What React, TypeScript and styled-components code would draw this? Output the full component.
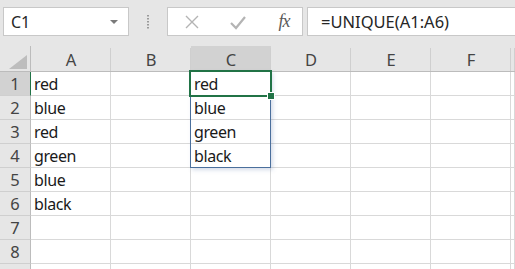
import styled, { createGlobalStyle } from "styled-components";

const GlobalStyle = createGlobalStyle`
  html, body {
    margin: 0;
    padding: 0;
    background: #e6e6e6;
  }
  body {
    font-family: "Noto Sans", "Open Sans", sans-serif;
    overflow: hidden;
  }
`;

const Page = styled.div`
  width: 515px;
  height: 269px;
  overflow: hidden;
  display: flex;
  flex-direction: column;
  background: #e6e6e6;
`;

const FormulaBar = styled.div`
  display: flex;
  align-items: flex-start;
  height: 46px;
  flex-shrink: 0;
  padding: 7px 0 0 3px;
  box-sizing: border-box;
`;

const NameBox = styled.div`
  width: 126px;
  height: 29px;
  box-sizing: border-box;
  background: #fff;
  border: 1px solid #c8c8c8;
  display: flex;
  align-items: center;
  justify-content: space-between;
  padding: 0 10px 0 7px;
  font-size: 16px;
  color: #262626;
`;

const Caret = styled.span`
  width: 0;
  height: 0;
  border-left: 4px solid transparent;
  border-right: 4px solid transparent;
  border-top: 4px solid #7a7a7a;
  margin-top: 1px;
`;

const Grip = styled.div`
  width: 38px;
  height: 29px;
  display: flex;
  align-items: center;
  justify-content: center;
`;

const ButtonsBox = styled.div`
  width: 136px;
  height: 29px;
  box-sizing: border-box;
  background: #fff;
  border: 1px solid #c8c8c8;
  display: flex;
  align-items: center;
  padding-left: 12px;
  gap: 22px;
`;

const IconButton = styled.span`
  width: 24px;
  height: 24px;
  display: flex;
  align-items: center;
  justify-content: center;
`;

const Fx = styled.i`
  font-family: "Liberation Serif", serif;
  font-size: 18px;
  color: #5a5a5a;
  letter-spacing: -1px;
`;

const FormulaInput = styled.div`
  flex: 1;
  height: 29px;
  margin-left: 4px;
  box-sizing: border-box;
  background: #fff;
  border: 1px solid #c8c8c8;
  border-right: none;
  display: flex;
  align-items: center;
  padding-left: 13px;
  font-size: 16.5px;
  color: #262626;
`;

const Sheet = styled.div`
  display: grid;
  grid-template-columns: 31px repeat(6, 80px) 1fr;
  grid-template-rows: 26px repeat(9, 24px);
  background: #fff;
  flex: 1;
`;

type Pos = { $col: number; $row: number };

const placed = (p: Pos) => `
  grid-column: ${p.$col};
  grid-row: ${p.$row};
`;

const Corner = styled.div`
  grid-column: 1;
  grid-row: 1;
  background: #e6e6e6;
  border-right: 1px solid #bcbcbc;
  border-bottom: 1px solid #bcbcbc;
  display: flex;
  align-items: flex-end;
  justify-content: flex-end;
  padding: 0 3px 2px 0;
`;

const ColHeader = styled.div<Pos & { $active?: boolean }>`
  ${placed}
  background: linear-gradient(#cfcfcf, #cfcfcf) right bottom / 1px calc(100% - 2px) no-repeat,
    ${(p) => (p.$active ? "#d2d2d2" : "#e6e6e6")};
  border-bottom: 1px solid ${(p) => (p.$active ? "#217346" : "#bcbcbc")};
  display: flex;
  align-items: center;
  justify-content: center;
  padding-top: 1px;
  font-size: 16.5px;
  color: #444;
`;

const RowHeader = styled.div<Pos & { $active?: boolean }>`
  ${placed}
  background: ${(p) => (p.$active ? "#d2d2d2" : "#e6e6e6")};
  border-right: 1px solid ${(p) => (p.$active ? "#217346" : "#bcbcbc")};
  border-bottom: 1px solid #cfcfcf;
  display: flex;
  align-items: center;
  justify-content: center;
  font-size: 16.5px;
  color: #444;
`;

const Cell = styled.div<Pos>`
  ${placed}
  border-right: 1px solid #d9d9d9;
  border-bottom: 1px solid #d9d9d9;
  display: flex;
  align-items: center;
  padding-left: 3px;
  font-size: 16px;
  letter-spacing: -0.4px;
  color: #1a1a1a;
  white-space: nowrap;
  overflow: hidden;
`;

const SpillRange = styled.div<Pos & { $rows: number }>`
  grid-column: ${(p) => p.$col} / span 1;
  grid-row: ${(p) => p.$row} / span ${(p) => p.$rows};
  margin: -1px 0 0 -1px;
  border: 1px solid #4a6f9c;
  box-shadow: 2px 2px 4px rgba(90, 120, 170, 0.25);
  pointer-events: none;
  z-index: 1;
`;

const Selection = styled.div<Pos>`
  grid-column: ${(p) => p.$col} / span 1;
  grid-row: ${(p) => p.$row} / span 1;
  margin: -2px -1px -1px -2px;
  border: 2px solid #217346;
  position: relative;
  pointer-events: none;
  z-index: 2;
`;

const FillHandle = styled.span`
  position: absolute;
  right: -5px;
  bottom: -5px;
  width: 6px;
  height: 6px;
  background: #217346;
  border: 1px solid #fff;
`;

const columns = ["A", "B", "C", "D", "E", "F", ""];
const data: Record<string, string> = {
  A1: "red",
  A2: "blue",
  A3: "red",
  A4: "green",
  A5: "blue",
  A6: "black",
  C1: "red",
  C2: "blue",
  C3: "green",
  C4: "black",
};

function App() {
  const rows = [1, 2, 3, 4, 5, 6, 7, 8, 9];

  return (
    <Page>
      <GlobalStyle />
      <FormulaBar>
        <NameBox>
          C1
          <Caret />
        </NameBox>
        <Grip>
          <svg width="4" height="14" viewBox="0 0 4 14">
            {[1, 4, 7, 10, 13].map((y) => (
              <rect key={y} x="1" y={y - 1} width="2" height="1.5" fill="#9a9a9a" />
            ))}
          </svg>
        </Grip>
        <ButtonsBox>
          <IconButton>
            <svg width="16" height="16" viewBox="0 0 16 16">
              <path d="M2 2 L14 14 M14 2 L2 14" stroke="#b4b4b4" strokeWidth="1.4" fill="none" />
            </svg>
          </IconButton>
          <IconButton>
            <svg width="18" height="16" viewBox="0 0 18 16">
              <path d="M2 9 L7 14 L16 3" stroke="#b4b4b4" strokeWidth="2.2" fill="none" />
            </svg>
          </IconButton>
          <IconButton>
            <Fx>fx</Fx>
          </IconButton>
        </ButtonsBox>
        <FormulaInput>=UNIQUE(A1:A6)</FormulaInput>
      </FormulaBar>

      <Sheet>
        <Corner>
          <svg width="18" height="14" viewBox="0 0 18 14">
            <path d="M18 0 L18 14 L0 14 Z" fill="#bdbdbd" />
          </svg>
        </Corner>
        {columns.map((c, i) => (
          <ColHeader key={`c${i}`} $col={i + 2} $row={1} $active={c === "C"}>
            {c}
          </ColHeader>
        ))}
        {rows.map((r) => [
          <RowHeader key={`h${r}`} $col={1} $row={r + 1} $active={r === 1}>
            {r < 9 ? r : ""}
          </RowHeader>,
          ...columns.map((c, i) => (
            <Cell key={`${i}-${r}`} $col={i + 2} $row={r + 1}>
              {data[`${c}${r}`] ?? ""}
            </Cell>
          )),
        ])}
        <SpillRange $col={4} $row={2} $rows={4} />
        <Selection $col={4} $row={2}>
          <FillHandle />
        </Selection>
      </Sheet>
    </Page>
  );
}

export default App;
